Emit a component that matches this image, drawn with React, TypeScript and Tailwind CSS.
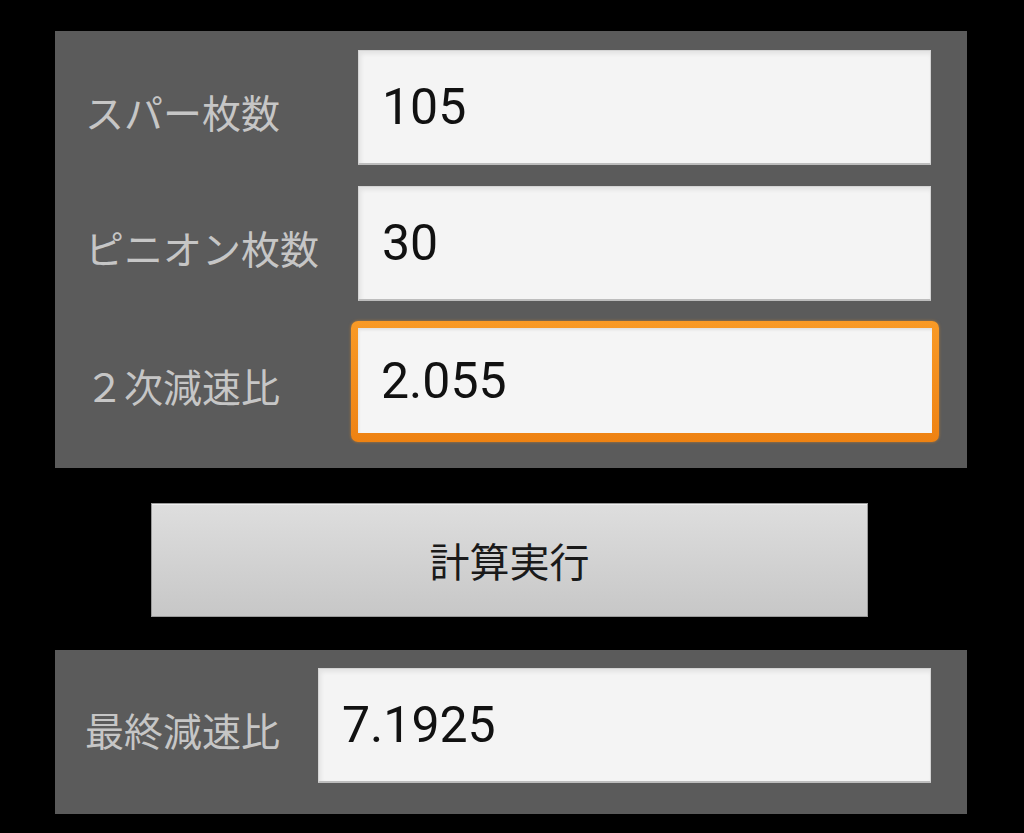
import React from "react";

const cjk = { fontFamily: '"Noto Sans CJK JP", "Noto Sans", sans-serif' };
const num = { fontFamily: 'Roboto, "Noto Sans", sans-serif' };

function Field({ value }: { value: string }) {
  return (
    <div className="flex h-[115px] w-[573px] items-center bg-[#f4f4f4] pl-[23px] border border-[#d4d4d4] border-b-[2px] border-b-[#bdbdbd] shadow-[inset_2px_3px_4px_rgba(0,0,0,0.07)]">
      <span className="text-[50px] leading-none text-[#111]" style={num}>{value}</span>
    </div>
  );
}

function Label({ text, className = "" }: { text: string; className?: string }) {
  return (
    <div className={"mt-[8px] text-[39px] leading-none text-[#c6c6c6] " + className} style={cjk}>
      {text}
    </div>
  );
}

export default function App() {
  return (
    <div className="min-h-[833px] w-[1024px] bg-black pt-[31px]">
      <div className="ml-[55px] w-[912px]">
        {/* top panel */}
        <div className="flex flex-col bg-[#5b5b5b] pt-[19px] pb-[26px]">
          <div className="flex h-[115px] items-center">
            <div className="w-[303px] pl-[30px]"><Label text="スパー枚数" /></div>
            <Field value="105" />
          </div>
          <div className="mt-[21px] flex h-[115px] items-center">
            <div className="w-[303px] pl-[30px]"><Label text="ピニオン枚数" /></div>
            <Field value="30" />
          </div>
          <div className="mt-[20px] flex h-[121px] items-center">
            <div className="w-[296px] pl-[30px]"><Label text="２次減速比" /></div>
            <div className="flex h-[121px] w-[588px] rounded-[7px] bg-gradient-to-b from-[#f99a26] to-[#ee8212] pt-[7px] pr-[7px] pb-[9px] pl-[7px] shadow-[0_0_3px_rgba(247,147,30,0.6)]">
              <div className="flex flex-1 items-center bg-[#f5f5f5] pl-[23px] shadow-[inset_1px_2px_3px_rgba(0,0,0,0.08)]">
                <span className="text-[50px] leading-none text-[#111]" style={num}>2.055</span>
              </div>
            </div>
          </div>
        </div>

        {/* button */}
        <div className="mt-[35px] ml-[96px] flex h-[114px] w-[717px] items-center justify-center bg-gradient-to-b from-[#dedede] to-[#c7c7c7] border border-[#9a9a9a] shadow-[inset_0_1px_0_rgba(255,255,255,0.5)]">
          <span className="text-[40px] leading-none text-[#1a1a1a]" style={cjk}>計算実行</span>
        </div>

        {/* bottom panel */}
        <div className="mt-[33px] flex h-[164px] items-start bg-[#5b5b5b] pt-[18px]">
          <div className="flex h-[115px] w-[263px] items-center pl-[30px]"><Label text="最終減速比" /></div>
          <div className="flex h-[115px] w-[613px] items-center bg-[#f4f4f4] pl-[23px] border border-[#d4d4d4] border-b-[2px] border-b-[#bdbdbd] shadow-[inset_2px_3px_4px_rgba(0,0,0,0.07)]">
            <span className="text-[50px] leading-none text-[#111]" style={num}>7.1925</span>
          </div>
        </div>
      </div>
    </div>
  );
}
